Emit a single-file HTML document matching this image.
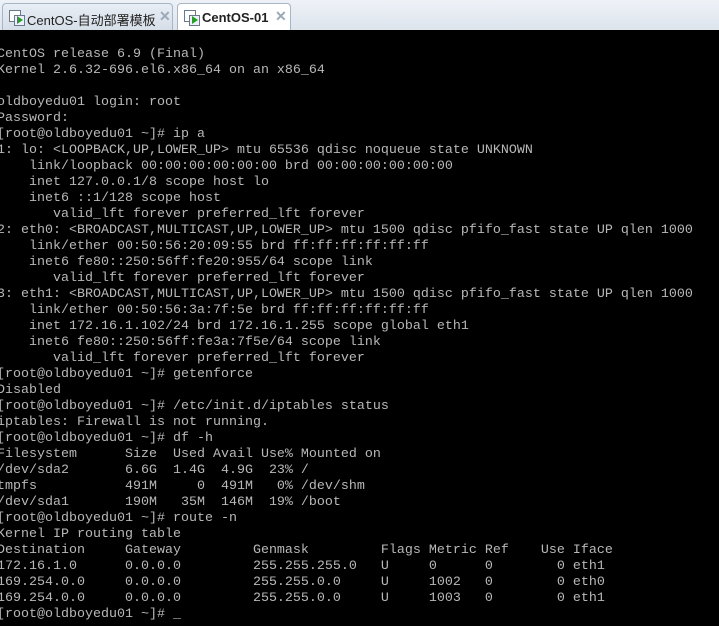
<!DOCTYPE html>
<html><head><meta charset="utf-8"><style>
body{margin:0;width:719px;height:626px;overflow:hidden;background:#000;position:relative}
#bar{position:absolute;left:0;top:0;width:719px;height:30px;background:linear-gradient(#eef2f7,#dde4ec);}
.tab{position:absolute;top:3px;height:27px;border:1px solid #a9b5c4;border-bottom:none;border-radius:4px 4px 0 0;font:13px "Liberation Sans","Noto Sans CJK SC",sans-serif;color:#222;box-sizing:border-box}
.t1{left:2px;width:171px;background:linear-gradient(#e8eef5,#d6dee8)}
.t2{left:177px;width:114px;background:#fff;font-weight:bold}
.ic{position:absolute;left:6px;top:6px;width:10px;height:10px;border:1px solid #6a7a8a;background:#fff}
.ic:after{content:"";position:absolute;left:4px;top:4px;width:9px;height:9px;border:1px solid #6a7a8a;background:#eef}
.pl{position:absolute;left:14px;top:12px;width:0;height:0;border-left:6px solid #2a9a2a;border-top:4px solid transparent;border-bottom:4px solid transparent;z-index:2}
.lbl{position:absolute;left:24px;top:6px;white-space:nowrap}
.x{position:absolute;top:4px;color:#9aa8b8;font-size:14px;font-weight:bold}
pre{position:absolute;left:-3px;top:47px;margin:0;font:13.33px/16px "Liberation Mono",monospace;color:#b8b8b8;white-space:pre}
</style></head><body>
<div id="bar">
<div class="tab t1"><div class="ic"></div><div class="pl"></div><span class="lbl">CentOS-自动部署模板</span><span class="x" style="left:156px">✕</span></div>
<div class="tab t2"><div class="ic"></div><div class="pl"></div><span class="lbl">CentOS-01</span><span class="x" style="left:97px">✕</span></div>
</div>
<pre>CentOS release 6.9 (Final)
Kernel 2.6.32-696.el6.x86_64 on an x86_64

oldboyedu01 login: root
Password:
[root@oldboyedu01 ~]# ip a
1: lo: &lt;LOOPBACK,UP,LOWER_UP&gt; mtu 65536 qdisc noqueue state UNKNOWN
    link/loopback 00:00:00:00:00:00 brd 00:00:00:00:00:00
    inet 127.0.0.1/8 scope host lo
    inet6 ::1/128 scope host
       valid_lft forever preferred_lft forever
2: eth0: &lt;BROADCAST,MULTICAST,UP,LOWER_UP&gt; mtu 1500 qdisc pfifo_fast state UP qlen 1000
    link/ether 00:50:56:20:09:55 brd ff:ff:ff:ff:ff:ff
    inet6 fe80::250:56ff:fe20:955/64 scope link
       valid_lft forever preferred_lft forever
3: eth1: &lt;BROADCAST,MULTICAST,UP,LOWER_UP&gt; mtu 1500 qdisc pfifo_fast state UP qlen 1000
    link/ether 00:50:56:3a:7f:5e brd ff:ff:ff:ff:ff:ff
    inet 172.16.1.102/24 brd 172.16.1.255 scope global eth1
    inet6 fe80::250:56ff:fe3a:7f5e/64 scope link
       valid_lft forever preferred_lft forever
[root@oldboyedu01 ~]# getenforce
Disabled
[root@oldboyedu01 ~]# /etc/init.d/iptables status
iptables: Firewall is not running.
[root@oldboyedu01 ~]# df -h
Filesystem      Size  Used Avail Use% Mounted on
/dev/sda2       6.6G  1.4G  4.9G  23% /
tmpfs           491M     0  491M   0% /dev/shm
/dev/sda1       190M   35M  146M  19% /boot
[root@oldboyedu01 ~]# route -n
Kernel IP routing table
Destination     Gateway         Genmask         Flags Metric Ref    Use Iface
172.16.1.0      0.0.0.0         255.255.255.0   U     0      0        0 eth1
169.254.0.0     0.0.0.0         255.255.0.0     U     1002   0        0 eth0
169.254.0.0     0.0.0.0         255.255.0.0     U     1003   0        0 eth1
[root@oldboyedu01 ~]# _</pre>
</body></html>
